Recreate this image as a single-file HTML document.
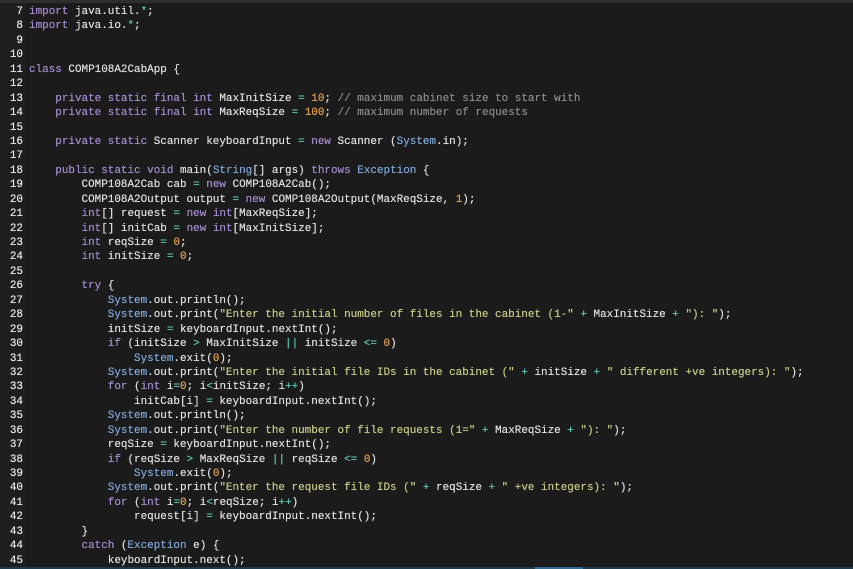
<!DOCTYPE html>
<html><head><meta charset="utf-8"><style>
html,body{margin:0;padding:0;background:#1b1b1b;width:853px;height:569px;overflow:hidden}
#top{position:absolute;left:0;top:0;width:853px;height:3px;background:#2e2e2e}
#bot{position:absolute;left:0;bottom:0;width:853px;height:2px;background:#1e3a4c}
#bot2{position:absolute;left:535px;bottom:0;width:48px;height:2px;background:#2f6a90}
#gut{position:absolute;left:0;top:0;width:26px;height:569px;background:#1e1e1e}
#code{position:absolute;left:0;top:5px;font-family:"Liberation Mono",monospace;font-size:10.95px;color:#e0e0e0;text-shadow:0 0 0.4px currentColor}
.l{height:14.45px;line-height:14.45px;white-space:pre;position:relative}
.n{display:inline-block;width:23px;text-align:right;color:#ececec;margin-right:6px}
.k{color:#a58bcf}.t{color:#7fa7d8}.s{color:#c8c987}.num{color:#e3a24e}.c{color:#8a8a8a}.o{color:#5fc8b6}
</style></head><body>
<div id="gut"></div><div id="top"></div>
<div id="code">
<div class="l"><span class="n">7</span><span class="k">import</span> java.util.<span class="o">*</span>;</div>
<div class="l"><span class="n">8</span><span class="k">import</span> java.io.<span class="o">*</span>;</div>
<div class="l"><span class="n">9</span></div>
<div class="l"><span class="n">10</span></div>
<div class="l"><span class="n">11</span><span class="k">class</span> COMP108A2CabApp {</div>
<div class="l"><span class="n">12</span></div>
<div class="l"><span class="n">13</span>    <span class="k">private static final int</span> MaxInitSize <span class="o">=</span> <span class="num">10</span>; <span class="c">// maximum cabinet size to start with</span></div>
<div class="l"><span class="n">14</span>    <span class="k">private static final int</span> MaxReqSize <span class="o">=</span> <span class="num">100</span>; <span class="c">// maximum number of requests</span></div>
<div class="l"><span class="n">15</span></div>
<div class="l"><span class="n">16</span>    <span class="k">private static</span> Scanner keyboardInput <span class="o">=</span> <span class="k">new</span> Scanner (<span class="t">System</span>.in);</div>
<div class="l"><span class="n">17</span></div>
<div class="l"><span class="n">18</span>    <span class="k">public static void</span> main(<span class="t">String</span>[] args) <span class="k">throws</span> <span class="t">Exception</span> {</div>
<div class="l"><span class="n">19</span>        COMP108A2Cab cab <span class="o">=</span> <span class="k">new</span> COMP108A2Cab();</div>
<div class="l"><span class="n">20</span>        COMP108A2Output output <span class="o">=</span> <span class="k">new</span> COMP108A2Output(MaxReqSize, <span class="num">1</span>);</div>
<div class="l"><span class="n">21</span>        <span class="k">int</span>[] request <span class="o">=</span> <span class="k">new int</span>[MaxReqSize];</div>
<div class="l"><span class="n">22</span>        <span class="k">int</span>[] initCab <span class="o">=</span> <span class="k">new int</span>[MaxInitSize];</div>
<div class="l"><span class="n">23</span>        <span class="k">int</span> reqSize <span class="o">=</span> <span class="num">0</span>;</div>
<div class="l"><span class="n">24</span>        <span class="k">int</span> initSize <span class="o">=</span> <span class="num">0</span>;</div>
<div class="l"><span class="n">25</span></div>
<div class="l"><span class="n">26</span>        <span class="k">try</span> {</div>
<div class="l"><span class="n">27</span>            <span class="t">System</span>.out.println();</div>
<div class="l"><span class="n">28</span>            <span class="t">System</span>.out.print(<span class="s">"Enter the initial number of files in the cabinet (1-"</span> <span class="o">+</span> MaxInitSize <span class="o">+</span> <span class="s">"): "</span>);</div>
<div class="l"><span class="n">29</span>            initSize <span class="o">=</span> keyboardInput.nextInt();</div>
<div class="l"><span class="n">30</span>            <span class="k">if</span> (initSize <span class="o">&gt;</span> MaxInitSize <span class="o">||</span> initSize <span class="o">&lt;=</span> <span class="num">0</span>)</div>
<div class="l"><span class="n">31</span>                <span class="t">System</span>.exit(<span class="num">0</span>);</div>
<div class="l"><span class="n">32</span>            <span class="t">System</span>.out.print(<span class="s">"Enter the initial file IDs in the cabinet ("</span> <span class="o">+</span> initSize <span class="o">+</span> <span class="s">" different +ve integers): "</span>);</div>
<div class="l"><span class="n">33</span>            <span class="k">for</span> (<span class="k">int</span> i<span class="o">=</span><span class="num">0</span>; i<span class="o">&lt;</span>initSize; i<span class="o">++</span>)</div>
<div class="l"><span class="n">34</span>                initCab[i] <span class="o">=</span> keyboardInput.nextInt();</div>
<div class="l"><span class="n">35</span>            <span class="t">System</span>.out.println();</div>
<div class="l"><span class="n">36</span>            <span class="t">System</span>.out.print(<span class="s">"Enter the number of file requests (1="</span> <span class="o">+</span> MaxReqSize <span class="o">+</span> <span class="s">"): "</span>);</div>
<div class="l"><span class="n">37</span>            reqSize <span class="o">=</span> keyboardInput.nextInt();</div>
<div class="l"><span class="n">38</span>            <span class="k">if</span> (reqSize <span class="o">&gt;</span> MaxReqSize <span class="o">||</span> reqSize <span class="o">&lt;=</span> <span class="num">0</span>)</div>
<div class="l"><span class="n">39</span>                <span class="t">System</span>.exit(<span class="num">0</span>);</div>
<div class="l"><span class="n">40</span>            <span class="t">System</span>.out.print(<span class="s">"Enter the request file IDs ("</span> <span class="o">+</span> reqSize <span class="o">+</span> <span class="s">" +ve integers): "</span>);</div>
<div class="l"><span class="n">41</span>            <span class="k">for</span> (<span class="k">int</span> i<span class="o">=</span><span class="num">0</span>; i<span class="o">&lt;</span>reqSize; i<span class="o">++</span>)</div>
<div class="l"><span class="n">42</span>                request[i] <span class="o">=</span> keyboardInput.nextInt();</div>
<div class="l"><span class="n">43</span>        }</div>
<div class="l"><span class="n">44</span>        <span class="k">catch</span> (<span class="t">Exception</span> e) {</div>
<div class="l"><span class="n">45</span>            keyboardInput.next();</div>
</div>
<div id="bot"></div><div id="bot2"></div>
</body></html>
